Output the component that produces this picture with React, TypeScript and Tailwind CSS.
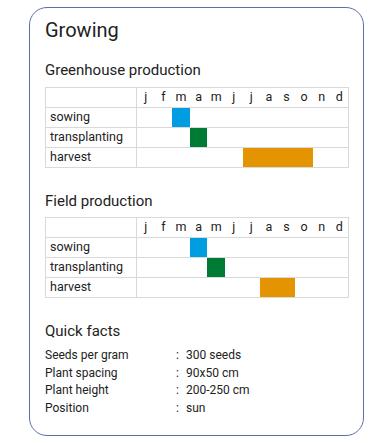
const months = ['j', 'f', 'm', 'a', 'm', 'j', 'j', 'a', 's', 'o', 'n', 'd'];

type Row = { label: string; start: number; end: number; color: string };

const greenhouse: Row[] = [
  { label: 'sowing', start: 2, end: 2, color: 'bg-[#009ee0]' },
  { label: 'transplanting', start: 3, end: 3, color: 'bg-[#007b36]' },
  { label: 'harvest', start: 6, end: 9, color: 'bg-[#e39400]' },
];

const field: Row[] = [
  { label: 'sowing', start: 3, end: 3, color: 'bg-[#009ee0]' },
  { label: 'transplanting', start: 4, end: 4, color: 'bg-[#007b36]' },
  { label: 'harvest', start: 7, end: 8, color: 'bg-[#e39400]' },
];

const facts = [
  ['Seeds per gram', '300 seeds'],
  ['Plant spacing', '90x50 cm'],
  ['Plant height', '200-250 cm'],
  ['Position', 'sun'],
];

const Calendar = ({ rows }: { rows: Row[] }) => (
  <div className="w-[304px] border border-[#d9d9d9] text-[12.5px] text-[#222]">
    <div className="flex h-[19px]">
      <div className="w-[91px] shrink-0 border-r border-[#d9d9d9]" />
      <div className="grid flex-1 grid-cols-12">
        {months.map((m, i) => (
          <div key={i} className="flex items-center justify-center leading-none">
            {m}
          </div>
        ))}
      </div>
    </div>
    {rows.map((r) => (
      <div key={r.label} className="flex h-[20px] border-t border-[#d9d9d9]">
        <div className="flex w-[91px] shrink-0 items-center border-r border-[#d9d9d9] pl-[4px]">{r.label}</div>
        <div className="relative flex-1">
          <div
            className={`absolute top-0 bottom-0 ${r.color}`}
            style={{
              left: `${(r.start / 12) * 100}%`,
              width: `${((r.end - r.start + 1) / 12) * 100}%`,
            }}
          />
        </div>
      </div>
    ))}
  </div>
);

export default function App() {
  return (
    <div className="min-h-[443px] bg-white pt-[7px] pl-[29px]" style={{ fontFamily: 'Roboto, sans-serif' }}>
      <div className="h-[429px] w-[335px] rounded-[18px] border border-[#5b6fae] px-[15px] text-[#222]">
        <h1 className="mt-[10px] text-[20px] leading-[24px]">Growing</h1>

        <h2 className="mt-[18px] text-[15px] leading-[20px]">Greenhouse production</h2>
        <div className="mt-[7px]">
          <Calendar rows={greenhouse} />
        </div>

        <h2 className="mt-[23px] text-[15px] leading-[20px]">Field production</h2>
        <div className="mt-[6px]">
          <Calendar rows={field} />
        </div>

        <h2 className="mt-[23px] text-[15px] leading-[20px]">Quick facts</h2>
        <div className="mt-[6px] text-[12px] leading-[17.5px]">
          {facts.map(([k, v]) => (
            <div key={k} className="flex">
              <div className="w-[131px]">{k}</div>
              <div className="w-[10px]">:</div>
              <div>{v}</div>
            </div>
          ))}
        </div>
      </div>
    </div>
  );
}
